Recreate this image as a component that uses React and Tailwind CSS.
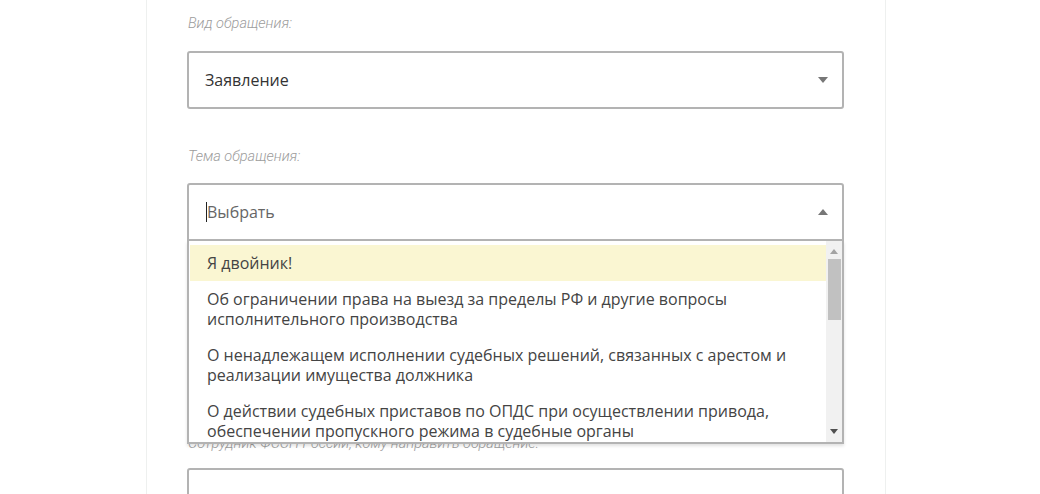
import { useState } from "react";

const OPTIONS = [
    "Я двойник!",
    "Об ограничении права на выезд за пределы РФ и другие вопросы исполнительного производства",
    "О ненадлежащем исполнении судебных решений, связанных с арестом и реализации имущества должника",
    "О действии судебных приставов по ОПДС при осуществлении привода, обеспечении пропускного режима в судебные органы",
    "О розыске должника, его имущества или розыске ребенка",
];

function Label({ children, className = "" }) {
    return (
        <div className={`h-[16px] text-[14.5px] leading-[16px] italic font-light text-[#9c9c9c] whitespace-nowrap ${className}`} style={{ fontFamily: "Roboto, sans-serif" }}>
            {children}
        </div>
    );
}

function Caret({ up }) {
    return (
        <svg width="10" height="6" viewBox="0 0 10 6" className="shrink-0">
            {up ? <path d="M0 6 L5 0 L10 6 Z" fill="#777" /> : <path d="M0 0 L5 6 L10 0 Z" fill="#777" />}
        </svg>
    );
}

function ScrollArrow({ up, color }) {
    return (
        <svg width="8" height="5" viewBox="0 0 8 5">
            {up ? <path d="M0 5 L4 0 L8 5 Z" fill={color} /> : <path d="M0 0 L4 5 L8 0 Z" fill={color} />}
        </svg>
    );
}

export default function App() {
    const [active] = useState(0);

    return (
        <div className="min-h-[494px] h-[494px] overflow-hidden bg-white" style={{ fontFamily: "'Open Sans', sans-serif" }}>
            <div className="ml-[146px] w-[740px] h-full border-x border-[#eef0ef] pl-[40px] pr-[41px] pt-[16px]">
                <Label className="pl-[1px]">Вид обращения:</Label>
                <div className="mt-[19px] h-[58px] flex items-center justify-between border-2 border-[#b3b3b3] rounded-[3px] pl-[16px] pr-[14px]">
                    <span className="text-[16px] text-[#333]">Заявление</span>
                    <Caret />
                </div>

                <Label className="mt-[40px] pl-[1px]">Тема обращения:</Label>
                <div className="relative mt-[18px]">
                    <div className="h-[58px] flex items-center justify-between border-2 border-[#b3b3b3] rounded-t-[3px] pl-[17px] pr-[14px]">
                        <span className="flex items-center text-[16px] text-[#666]">
                            <span className="w-px h-[20px] bg-[#222]" />
                            Выбрать
                        </span>
                        <Caret up />
                    </div>

                    {/* Open option list */}
                    <div className="absolute left-0 right-0 top-full z-10 h-[203px] flex bg-white border-2 border-t-0 border-[#b3b3b3] shadow-[0_2px_3px_rgba(0,0,0,0.12)]">
                        <div className="flex-1 overflow-hidden pl-[1px] pt-[4px]">
                            {OPTIONS.map((o, i) => (
                                <div
                                    key={o}
                                    className={`px-[17px] py-[8px] text-[16px] leading-[20px] text-[#444] ${i === active ? "bg-[#faf6d2]" : ""}`}
                                >
                                    {o}
                                </div>
                            ))}
                        </div>
                        <div className="w-[16px] flex flex-col items-center bg-[#f1f1f1]">
                            <div className="h-[18px] flex items-center justify-center pt-[2px]">
                                <ScrollArrow up color="#a3a3a3" />
                            </div>
                            <div className="w-[13px] h-[61px] bg-[#c1c1c1]" />
                            <div className="flex-1" />
                            <div className="h-[17px] flex items-center justify-center pb-[4px]">
                                <ScrollArrow color="#505050" />
                            </div>
                        </div>
                    </div>
                </div>

                <div className="h-[195px]" />
                <Label className="pl-[1px]">Сотрудник ФССП России, кому направить обращение:</Label>
                <div className="mt-[16px] h-[58px] border-2 border-[#b3b3b3] rounded-[3px]" />
            </div>
        </div>
    );
}
